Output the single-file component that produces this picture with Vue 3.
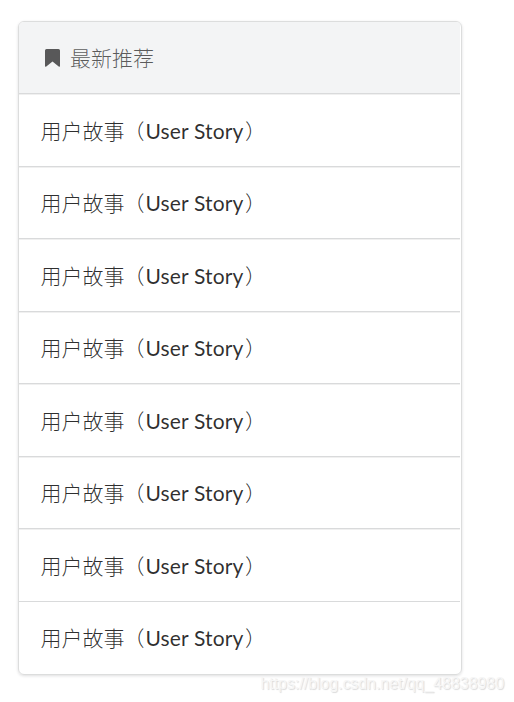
<template>
  <div class="page">
    <div class="segments">
      <div class="segment header">
        <svg class="bookmark" viewBox="0 0 15 18" width="15" height="18">
          <path d="M1.5 0h12A1.5 1.5 0 0 1 15 1.5V16.8Q15 18.4 13.7 17.5L7.5 12.6 1.3 17.5Q0 18.4 0 16.8V1.5A1.5 1.5 0 0 1 1.5 0z" fill="currentColor" />
        </svg>
        <span class="cjk">最新推荐</span>
      </div>
      <div class="segment" v-for="(item, index) in recommends" :key="index">
        <span class="cjk">{{ item.titulo }}<span class="open">（</span></span><span class="latin">{{ item.subtitle }}</span><span class="cjk close">）</span>
      </div>
    </div>
    <div class="watermark">https://blog.csdn.net/qq_48838980</div>
  </div>
</template>

<script setup>
import { ref } from 'vue';

const recommends = ref(
  Array.from({ length: 8 }, () => ({ titulo: '用户故事', subtitle: 'User Story' }))
);
</script>

<style>
body {
  background: #fff;
}
</style>

<style scoped>
.page {
  position: relative;
  box-sizing: border-box;
  height: 702px;
  padding: 21px 52px 0 18px;
  overflow: hidden;
  font-family: Lato, "Noto Sans CJK SC", sans-serif;
  font-size: 21px;
  color: rgba(0, 0, 0, 0.82);
}

.segments {
  box-sizing: border-box;
  height: 654px;
  padding-right: 1px;
  border: 1px solid #dcdddd;
  border-radius: 6px;
  box-shadow: 0 1px 3px rgba(34, 36, 38, 0.15);
  overflow: hidden;
}

.segment {
  display: flex;
  align-items: center;
  box-sizing: border-box;
  height: 72.5px;
  padding: 1px 21.5px 0;
  line-height: 30px;
  white-space: nowrap;
  border-top: 1px solid #d9dadb;
  box-shadow: inset 0 1px 0 #f0f0f0;
}

.segment:last-child {
  box-shadow: none;
}

.header {
  height: 71.3px;
  padding: 2px 26px 0;
  background: #f3f4f5;
  color: rgba(0, 0, 0, 0.64);
  border-top: none;
  box-shadow: none;
}

.bookmark {
  margin-right: 10px;
  margin-bottom: 2px;
}

.cjk {
  padding-bottom: 1.6px;
  font-family: "Noto Sans CJK SC", sans-serif;
  font-weight: 300;
}

.header .cjk {
  padding-bottom: 3px;
}

.open {
  margin-left: -1px;
  margin-right: 1px;
}

.latin {
  letter-spacing: 0.15px;
}

.close {
  margin-left: 1.5px;
}

.watermark {
  position: absolute;
  right: 10px;
  bottom: 8px;
  font-family: "Liberation Sans", Arial, sans-serif;
  font-size: 16px;
  line-height: 20px;
  letter-spacing: -0.06px;
  color: #f6f6f6;
  text-shadow: 1px 1px 1px rgba(0, 0, 0, 0.15);
}
</style>
